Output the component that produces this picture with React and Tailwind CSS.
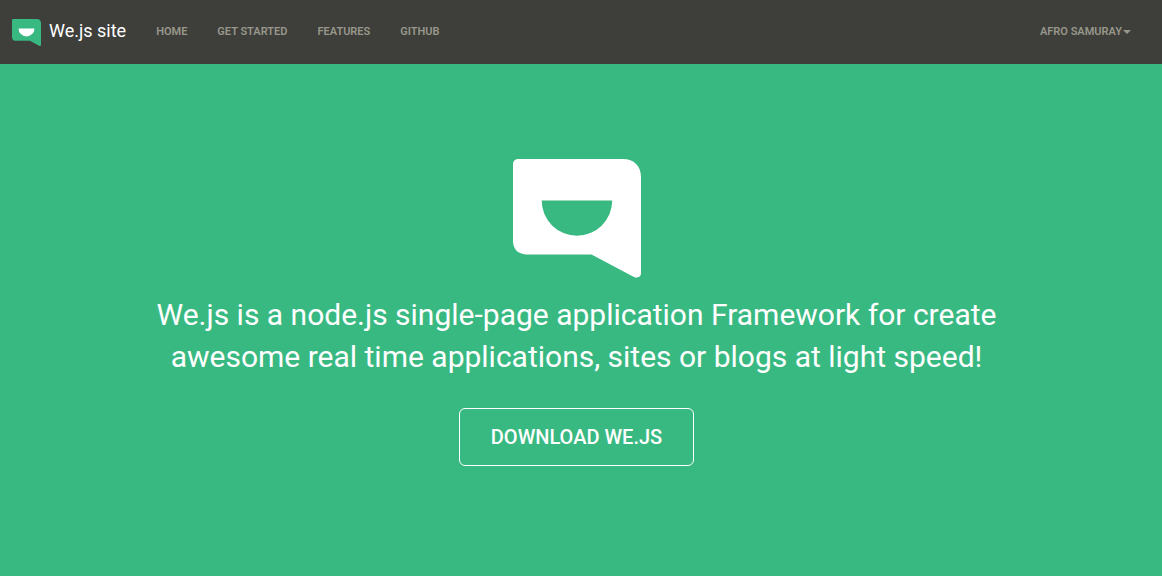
const NAV_LINKS = ["Home", "Get started", "Features", "GitHub"];

function Logo({ className, bubble, smile }) {
  return (
    <svg className={className} viewBox="0 0 128 119" preserveAspectRatio="none" aria-hidden="true">
      <path
        className={bubble}
        d="M4.500 0H110C121 0 128 7 128 18V114Q128 118 124 118.500Q122.500 119 120 117.500L78.500 95.500H13Q1 94.500 0 83V4.500Q0.500 0.500 4.500 0Z"
      />
      <path className={smile} d="M28.700 41.500H99.200A35.250 35.250 0 0 1 28.700 41.500Z" />
    </svg>
  );
}

function Navbar() {
  return (
    <header className="flex h-16 items-start bg-[#3e3f3a] pr-[31px] pl-3">
      <a href="#" className="mt-[21px] flex text-lg leading-5 text-white">
        <Logo className="mr-2 -mt-0.5 h-[27px] w-[29px]" bubble="fill-[#39b982]" smile="fill-white" />
        We.js site
      </a>
      <nav className="mt-[22px] ml-[30px] flex gap-[30px]">
        {NAV_LINKS.map((label) => (
          <a key={label} href="#" className="text-[11px] leading-5 font-semibold text-[#98978b] uppercase">
            {label}
          </a>
        ))}
      </nav>
      <button
        type="button"
        aria-haspopup="menu"
        className="mt-[22px] ml-auto flex items-center gap-px text-[11px] leading-5 font-semibold text-[#98978b] uppercase"
      >
        Afro Samuray
        <span className="border-x-4 border-t-4 border-x-transparent border-t-[#98978b]" />
      </button>
    </header>
  );
}

export default function App() {
  return (
    <div className="flex min-h-screen flex-col bg-[#39b982] font-['Roboto',sans-serif]">
      <Navbar />
      <main className="flex flex-1 flex-col items-center px-4 pt-[95px] pr-[25px] pb-16 text-white">
        <Logo className="h-[119px] w-32" bubble="fill-white" smile="fill-[#39b982]" />
        <h1 className="mt-4 max-w-[900px] text-center text-3xl leading-[42px] font-normal">
          We.js is a node.js single-page application Framework for create awesome real time
          applications, sites or blogs at light speed!
        </h1>
        <a
          href="#"
          className="mt-[30px] rounded-md border border-white px-[31px] py-[14px] text-xl leading-7 font-medium uppercase"
        >
          Download We.js
        </a>
      </main>
    </div>
  );
}
